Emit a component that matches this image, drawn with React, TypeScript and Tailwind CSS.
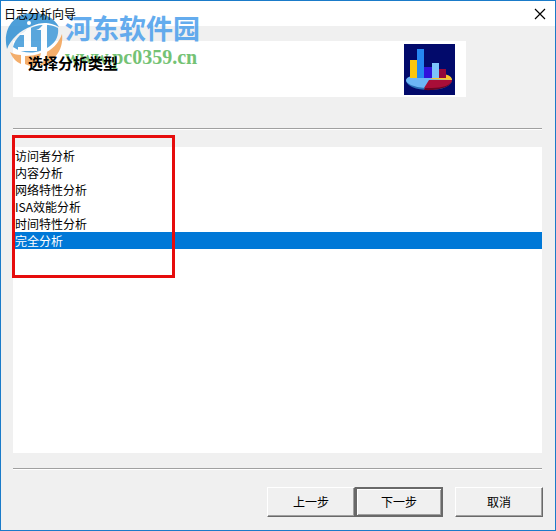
import React, { useState } from 'react';

const analysisTypes = [
  '访问者分析',
  '内容分析',
  '网络特性分析',
  'ISA效能分析',
  '时间特性分析',
  '完全分析',
];

const CloseIcon = () => (
  <svg className="w-3 h-3" viewBox="0 0 12 12" fill="none" stroke="#000" strokeWidth="1.2" aria-hidden="true">
    <path d="M1 1l10 10M11 1L1 11" />
  </svg>
);

// Bars standing on a pie
const ChartLogo = () => (
  <svg className="w-[51px] h-[51px]" viewBox="0 0 51 51" aria-hidden="true">
    <rect width="51" height="51" fill="#020a6b" />
    <path d="M2 36c0 6 10 10 23 10s23-4 23-10z" fill="#2a70b8" />
    <path d="M20 46c14 1 28-3 28-10H24z" fill="#6b0424" />
    <path d="M2 36c0-3 8-6 23-6s23 3 23 6H26l-5 8C10 43 2 40 2 36z" fill="#6cb6f6" />
    <path d="M26 35l14-5c5 1 8 3 8 6z" fill="#fbc52c" />
    <path d="M25 36h23c0 5-10 8-20 8h-8z" fill="#a80e38" />
    <rect x="6" y="16" width="7" height="18" fill="#fcc70c" />
    <rect x="13" y="5" width="7" height="29" fill="#2587f2" />
    <rect x="20" y="23" width="8" height="11" fill="#3012dc" />
    <rect x="28" y="19" width="7" height="15" fill="#7cc4fa" />
    <rect x="35" y="25" width="7" height="9" fill="#94083a" />
  </svg>
);

// Round mark of the download site
const SiteMark = () => (
  <svg className="w-[58px] h-[58px]" viewBox="0 0 58 58" aria-hidden="true">
    <path d="M2 40C-3 20 9 4 28 4c12 0 21 5 26 14-9-5-18-5-27-1C14 22 6 30 2 40z" fill="#2f8fd3" />
    <path d="M8 38c2-8 9-16 20-20 9-3 17-3 25 1 1 7-2 14-8 18-10 7-24 10-37 1z" fill="#3f9ad9" />
    <path d="M57 25c2 17-9 30-26 32 4-3 6-7 7-12 9-4 16-11 19-20z" fill="#f3a052" />
    <path d="M5 43c3 2 7 3 11 3v9C11 53 7 48 5 43zM20 47c6 0 12-1 16-3-1 6-4 10-8 13-3 0-6-1-8-2z" fill="#f3a052" />
    <path d="M12 26c5-1 8-4 11-7h3v19h6v4H13v-4h6V26z" fill="#fff" />
    <path d="M31 21c4-1 6-4 8-7h3v29c0 7-4 11-10 14 3-4 4-8 4-14V21z" fill="#fff" />
    <circle cx="24" cy="14" r="2" fill="#fff" />
  </svg>
);

const WizardButton = ({ children, primary = false }: { children: React.ReactNode; primary?: boolean }) => (
  <button
    type="button"
    className={
      primary
        ? 'w-[88px] h-[30px] border-2 border-[#696969] bg-[#f0f0f0] shadow-[inset_1px_1px_0_#fff,inset_-1px_-1px_0_#a0a0a0]'
        : 'w-[88px] h-[30px] border border-t-white border-l-white border-r-[#696969] border-b-[#696969] bg-[#f0f0f0] shadow-[inset_-1px_-1px_0_#a0a0a0]'
    }
  >
    {children}
  </button>
);

const App = () => {
  const [selected, setSelected] = useState('完全分析');

  return (
    <div className="relative flex min-h-screen flex-col border border-[#1a7bc9] bg-[#f0f0f0] text-xs text-black font-['Noto_Sans_CJK_SC','Noto_Sans',sans-serif]">
      {/* Title bar */}
      <header className="flex h-[25px] items-center justify-between bg-white pl-[3px] pr-[9px]">
        <h1 className="relative z-10 leading-6">日志分析向导</h1>
        <button type="button" aria-label="关闭">
          <CloseIcon />
        </button>
      </header>

      <main className="flex flex-1 flex-col px-3 pt-[15px] pb-[13px]">
        {/* Banner */}
        <div className="mr-[77px] flex h-14 items-center justify-between bg-white pl-[15px] pr-[11px]">
          <h2 className="relative z-10 pb-3 text-[15px] font-bold">选择分析类型</h2>
          <ChartLogo />
        </div>

        <hr className="mr-px mt-[31px] h-[2px] border-t border-b border-t-[#a0a0a0] border-b-white" />

        {/* Type list */}
        <div className="relative mr-px mt-[17px] flex flex-1">
          <select
            size={6}
            aria-label="选择分析类型"
            value={selected}
            onChange={(e) => setSelected(e.target.value)}
            className="w-full bg-white outline-none [&_option:checked]:bg-[#0078d7] [&_option:checked]:text-white"
          >
            {analysisTypes.map((type) => (
              <option key={type} className="block h-[17px] min-h-0 p-0 pl-[2px] leading-4 text-black">
                {type}
              </option>
            ))}
          </select>
          <div className="pointer-events-none absolute -left-px -top-3 h-[143px] w-[163px] border-3 border-[#e60c0c]" />
        </div>

        <hr className="mr-px mt-[15px] h-[2px] border-t border-b border-t-[#a0a0a0] border-b-white" />

        <div className="mt-[17px] flex justify-end">
          <WizardButton>上一步</WizardButton>
          <WizardButton primary>下一步</WizardButton>
          <div className="ml-3 flex">
            <WizardButton>取消</WizardButton>
          </div>
        </div>
      </main>

      {/* Watermark */}
      <div className="pointer-events-none absolute left-1 top-2 flex opacity-85">
        <SiteMark />
        <div className="pl-[2px]">
          <p className="text-[27px] leading-[38px] font-bold text-[#4a9eec]">河东软件园</p>
          <p className="font-['Liberation_Serif',serif] text-xl leading-5 font-bold text-[#5cb85c]">www.pc0359.cn</p>
        </div>
      </div>
    </div>
  );
};

export default App;
